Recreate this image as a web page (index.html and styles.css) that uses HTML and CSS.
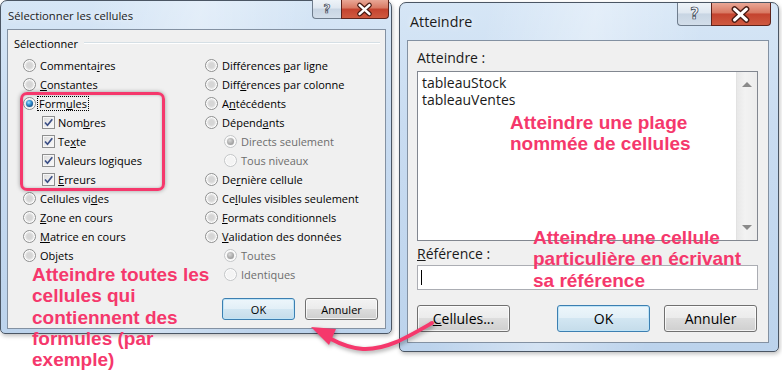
FILE: index.html
```html
<!DOCTYPE html>
<html lang="fr">
<head>
<meta charset="utf-8">
<title>Atteindre</title>
<link rel="stylesheet" href="styles.css">
</head>
<body>
<div class="stage">
  <section class="dlg dlg-left">
    <header class="titlebar">
      <span class="title">Sélectionner les cellules</span>
      <div class="caps">
        <span class="cap-help">?</span>
        <span class="cap-close"><svg viewBox="0 0 48 19" width="48" height="19"><path d="M19 5 L29 14 M29 5 L19 14" stroke="#4a1c14" stroke-width="5" stroke-linecap="round"/><path d="M19 5 L29 14 M29 5 L19 14" stroke="#fff" stroke-width="2.6" stroke-linecap="round"/></svg></span>
      </div>
    </header>
    <div class="client client-left">
      <div class="group-head"><span>Sélectionner</span><span class="group-line"></span></div>
      <div class="cols">
        <div class="col">
          <div class="row"><span class="radio"></span><span>Commenta<u>i</u>res</span></div>
          <div class="row"><span class="radio"></span><span><u>C</u>onstantes</span></div>
          <div class="row"><span class="radio on"></span><span class="focus">Form<u>u</u>les</span></div>
          <div class="row sub"><span class="chk"><svg viewBox="0 0 11 11" width="11" height="11"><path d="M2 5.5 L4.5 8.3 L9.3 2.2" fill="none" stroke="#3b4f86" stroke-width="1.7"/></svg></span><span>Nom<u>b</u>res</span></div>
          <div class="row sub"><span class="chk"><svg viewBox="0 0 11 11" width="11" height="11"><path d="M2 5.5 L4.5 8.3 L9.3 2.2" fill="none" stroke="#3b4f86" stroke-width="1.7"/></svg></span><span>Te<u>x</u>te</span></div>
          <div class="row sub"><span class="chk"><svg viewBox="0 0 11 11" width="11" height="11"><path d="M2 5.5 L4.5 8.3 L9.3 2.2" fill="none" stroke="#3b4f86" stroke-width="1.7"/></svg></span><span>Valeurs lo<u>g</u>iques</span></div>
          <div class="row sub"><span class="chk"><svg viewBox="0 0 11 11" width="11" height="11"><path d="M2 5.5 L4.5 8.3 L9.3 2.2" fill="none" stroke="#3b4f86" stroke-width="1.7"/></svg></span><span><u>E</u>rreurs</span></div>
          <div class="row"><span class="radio"></span><span>Cellules vi<u>d</u>es</span></div>
          <div class="row"><span class="radio"></span><span><u>Z</u>one en cours</span></div>
          <div class="row"><span class="radio"></span><span><u>M</u>atrice en cours</span></div>
          <div class="row"><span class="radio"></span><span>Ob<u>j</u>ets</span></div>
        </div>
        <div class="col">
          <div class="row"><span class="radio"></span><span>Différences <u>p</u>ar ligne</span></div>
          <div class="row"><span class="radio"></span><span>Diff<u>é</u>rences par colonne</span></div>
          <div class="row"><span class="radio"></span><span>A<u>n</u>técédents</span></div>
          <div class="row"><span class="radio"></span><span>Dépend<u>a</u>nts</span></div>
          <div class="row sub dis"><span class="radio on"></span><span>Directs seulement</span></div>
          <div class="row sub dis"><span class="radio"></span><span>Tous niveaux</span></div>
          <div class="row"><span class="radio"></span><span>De<u>r</u>nière cellule</span></div>
          <div class="row"><span class="radio"></span><span>Ce<u>l</u>lules visibles seulement</span></div>
          <div class="row"><span class="radio"></span><span><u>F</u>ormats conditionnels</span></div>
          <div class="row"><span class="radio"></span><span><u>V</u>alidation des données</span></div>
          <div class="row sub dis"><span class="radio on"></span><span>Toutes</span></div>
          <div class="row sub dis"><span class="radio"></span><span>Identiques</span></div>
        </div>
      </div>
      <div class="btnrow-left">
        <span class="btn btn-sm default">OK</span>
        <span class="btn btn-sm">Annuler</span>
      </div>
    </div>
  </section>

  <section class="dlg dlg-right">
    <header class="titlebar titlebar-right">
      <span class="title title-right">Atteindre</span>
      <div class="caps caps-right">
        <span class="cap-help cap-help-r">?</span>
        <span class="cap-close cap-close-r"><svg viewBox="0 0 60 23" width="60" height="23"><path d="M24 6 L36 17 M36 6 L24 17" stroke="#4a1c14" stroke-width="6" stroke-linecap="round"/><path d="M24 6 L36 17 M36 6 L24 17" stroke="#fff" stroke-width="3.2" stroke-linecap="round"/></svg></span>
      </div>
    </header>
    <div class="client client-right">
      <div class="lbl">Atteindre :</div>
      <div class="listbox">
        <div class="items">
          <div>tableauStock</div>
          <div>tableauVentes</div>
        </div>
        <div class="vscroll">
          <span class="arr-up"></span>
          <span class="arr-down"></span>
        </div>
      </div>
      <div class="lbl lbl-ref"><u>R</u>éférence :</div>
      <div class="input"><span class="caret"></span></div>
      <div class="btnrow-right">
        <span class="btn btn-lg"><span><u>C</u>ellules...</span></span>
        <span class="btn-spacer"></span>
        <span class="btn btn-lg default">OK</span>
        <span class="btn btn-lg">Annuler</span>
      </div>
    </div>
  </section>

  <div class="pinkbox"></div>
  <p class="note note-left">Atteindre toutes les<br>cellules qui<br>contiennent des<br>formules (par<br>exemple)</p>
  <p class="note note-r1">Atteindre une plage<br>nommée de cellules</p>
  <p class="note note-r2">Atteindre une cellule<br>particulière en écrivant<br>sa référence</p>
  <svg class="arrow" viewBox="0 0 782 389" width="782" height="389">
    <path d="M432 323 C 406 338, 386 350, 363 349 C 351 348, 342 345, 331 339" fill="none" stroke="#f5386c" stroke-width="4" stroke-linecap="round"/>
    <polygon points="311,327 336,329 329,345" fill="#f5386c"/>
  </svg>
</div>
</body>
</html>
```

FILE: styles.css
```css
html, body {
  margin: 0;
  padding: 0;
  background: #ffffff;
}
body {
  width: 782px;
  height: 389px;
  overflow: hidden;
  font-family: "Open Sans", "Noto Sans", sans-serif;
  color: #000;
}
.stage {
  position: relative;
  display: flex;
  align-items: flex-start;
  gap: 7px;
  width: 782px;
  height: 389px;
}

/* ---------- dialog frames ---------- */
.dlg {
  box-sizing: border-box;
  display: flex;
  flex-direction: column;
  border: 1px solid #4b5664;
  border-radius: 7px 7px 5px 5px;
  background:
    linear-gradient(100deg, rgba(255,255,255,0) 20%, rgba(255,255,255,.35) 45%, rgba(255,255,255,0) 70%),
    linear-gradient(180deg, #d6e6f6 0%, #c9dcf1 35%, #bcd3ec 100%);
  box-shadow: 1px 2px 4px rgba(0,0,0,.25);
}
.dlg-left {
  width: 392px;
  height: 334px;
  padding: 0 5px 4px 6px;
}
.dlg-right {
  width: 380px;
  height: 350px;
  margin-top: 2px;
  padding: 0 9px 8px 7px;
}
.titlebar {
  display: flex;
  align-items: center;
  height: 28px;
  flex: none;
}
.titlebar-right {
  height: 37px;
}
.title {
  padding-left: 1px;
  font-size: 11.3px;
  color: #1b1b1b;
  text-shadow: 0 0 6px rgba(255,255,255,.9);
}
.title-right {
  padding-left: 3px;
  font-size: 14.3px;
}
.caps {
  margin-left: auto;
  margin-right: -3px;
  align-self: flex-start;
  margin-top: -1px;
  display: flex;
}
.caps-right {
  margin-right: -2px;
  margin-top: 0;
}
.cap-help {
  box-sizing: border-box;
  width: 29px;
  height: 19px;
  border: 1px solid #6f7d8d;
  border-top: none;
  border-right: none;
  border-radius: 0 0 0 4px;
  background: linear-gradient(180deg, #eef3f8 0%, #dfe7f0 45%, #c8d5e3 50%, #d3deea 100%);
  display: flex;
  align-items: center;
  justify-content: center;
  font-family: "DejaVu Sans", sans-serif;
  font-weight: bold;
  font-size: 12px;
  line-height: 1;
  color: #f4f6f9;
  -webkit-text-stroke: 0.7px #34404e;
}
.cap-help-r {
  width: 34px;
  height: 23px;
  font-size: 15px;
}
.cap-close {
  box-sizing: border-box;
  width: 48px;
  height: 19px;
  border: 1px solid #5e231b;
  border-top: none;
  border-radius: 0 0 4px 0;
  background: linear-gradient(180deg, #e9a796 0%, #d87862 45%, #c4432f 50%, #cf5a40 100%);
  overflow: hidden;
  display: flex;
}
.cap-close svg {
  display: block;
  margin-left: -1px;
}
.cap-close-r {
  width: 60px;
  height: 23px;
}

/* ---------- client areas ---------- */
.client {
  flex: 1;
  box-sizing: border-box;
  border: 1px solid #8391a2;
  background: #f0f0f0;
  display: flex;
  flex-direction: column;
}
.client-left {
  padding: 6px 5px 0 6px;
  font-size: 11px;
}
.group-head {
  display: flex;
  align-items: center;
  gap: 6px;
  height: 14px;
  margin-bottom: 6px;
}
.group-line {
  flex: 1;
  height: 1px;
  background: #d5dfe5;
  border-bottom: 1px solid #ffffff;
}
.cols {
  display: grid;
  grid-template-columns: 182px 1fr;
  margin-left: 9px;
}
.col {
  display: flex;
  flex-direction: column;
}
.row {
  display: flex;
  align-items: center;
  gap: 4px;
  height: 19px;
  white-space: nowrap;
}
.row.sub {
  padding-left: 19px;
}
.row.sub .chk + span {
  margin-left: -1px;
}
.row.dis {
  color: #6d6d6d;
}
u {
  text-decoration-thickness: 1px;
  text-underline-offset: 1px;
}
.focus {
  outline: 1px dotted #000;
  outline-offset: 0;
  padding: 0 1px;
  margin-left: -2px;
  line-height: 13px;
}

/* radio */
.radio {
  position: relative;
  flex: none;
  box-sizing: border-box;
  width: 13px;
  height: 13px;
  border-radius: 50%;
  border: 1px solid #8e8f8f;
  background: radial-gradient(circle at 50% 50%, #d6d6d6 0 2.5px, #e6e6e6 4px, #f6f6f6 5.5px);
  box-shadow: inset 0 0 0 1px #fdfdfd;
}
.radio.on::after {
  content: "";
  position: absolute;
  left: 2px;
  top: 2px;
  width: 7px;
  height: 7px;
  border-radius: 50%;
  background: radial-gradient(circle at 40% 35%, #a8e4ff 0, #3c9ad8 35%, #0f4e89 75%, #0a3563 100%);
}
.row.dis .radio {
  border-color: #c4c6c8;
  background: #f4f4f4;
}
.row.dis .radio.on::after {
  background: radial-gradient(circle at 40% 35%, #d8d8d8 0, #a6a6a6 60%, #8d8d8d 100%);
}

/* checkbox */
.chk {
  flex: none;
  box-sizing: border-box;
  width: 13px;
  height: 13px;
  border: 1px solid #8e8f8f;
  background: linear-gradient(135deg, #d9d9d9 0%, #f0f0f0 60%, #fafafa 100%);
  box-shadow: inset 0 0 0 1px #f6f6f6;
  display: flex;
}
.chk svg {
  display: block;
}

/* buttons */
.btn {
  box-sizing: border-box;
  display: flex;
  align-items: center;
  justify-content: center;
  border: 1px solid #707070;
  border-radius: 3px;
  background: linear-gradient(180deg, #f3f3f3 0%, #ebebeb 49%, #dddddd 50%, #cfcfcf 100%);
  box-shadow: inset 0 0 0 1px rgba(255,255,255,.75);
  color: #000;
}
.btn.default {
  border-color: #3c7fb1;
  box-shadow: inset 0 0 0 1px #bfe4f7;
  background: linear-gradient(180deg, #edf6fb 0%, #e2eff7 49%, #d2e6f2 50%, #c5dcea 100%);
}
.btn-sm {
  width: 73px;
  height: 22px;
  font-size: 11px;
}
.btnrow-left {
  display: flex;
  justify-content: flex-end;
  gap: 10px;
  margin-top: 14px;
  margin-right: 2px;
}

/* right client */
.client-right {
  padding: 8px 10px 0 9px;
  font-size: 14px;
  color: #1a1a1a;
}
.lbl {
  height: 17px;
  line-height: 17px;
  white-space: nowrap;
}
.listbox {
  margin-top: 5px;
  box-sizing: border-box;
  height: 170px;
  border: 1px solid #828790;
  background: #fff;
  display: flex;
}
.items {
  flex: 1;
  padding: 2px 0 0 4px;
  line-height: 17px;
}
.vscroll {
  width: 20px;
  background: linear-gradient(90deg, #e8e8e8, #f2f2f2 40%, #ececec);
  border-left: 1px solid #e2e2e2;
  display: flex;
  flex-direction: column;
  justify-content: space-between;
  align-items: center;
  padding: 10px 0 10px;
}
.arr-up, .arr-down {
  width: 0;
  height: 0;
  border-left: 5px solid transparent;
  border-right: 5px solid transparent;
}
.arr-up {
  border-bottom: 5px solid #8a8a8a;
}
.arr-down {
  border-top: 5px solid #8a8a8a;
}
.lbl-ref {
  margin-top: 4px;
}
.input {
  margin-top: 3px;
  box-sizing: border-box;
  height: 25px;
  border: 1px solid #abadb3;
  background: #fff;
  display: flex;
  align-items: center;
  padding-left: 3px;
}
.caret {
  width: 1px;
  height: 15px;
  background: #000;
}
.btnrow-right {
  display: flex;
  gap: 14px;
  margin-top: 15px;
  margin-right: 1px;
}
.btn-lg {
  width: 93px;
  height: 27px;
  font-size: 14px;
}
.btn-spacer {
  flex: 1;
  margin-left: -14px;
  margin-right: 19px;
}

/* ---------- annotations ---------- */
.pinkbox {
  position: absolute;
  left: 20px;
  top: 92px;
  width: 145px;
  height: 99px;
  box-sizing: border-box;
  border: 3px solid #f5386c;
  border-radius: 7px;
  box-shadow: 0 0 4px rgba(0,0,0,.35), inset 0 0 3px rgba(0,0,0,.25);
}
.note {
  position: absolute;
  margin: 0;
  font-family: "Liberation Sans", Arial, sans-serif;
  font-weight: bold;
  font-size: 19px;
  line-height: 21.3px;
  color: #f5386c;
  white-space: nowrap;
}
.note-left {
  left: 32px;
  top: 264px;
}
.note-r1 {
  left: 510px;
  top: 112px;
}
.note-r2 {
  left: 533px;
  top: 227px;
}
.arrow {
  position: absolute;
  left: 0;
  top: 0;
  pointer-events: none;
  filter: drop-shadow(1px 2px 2px rgba(0,0,0,.35));
}
```
